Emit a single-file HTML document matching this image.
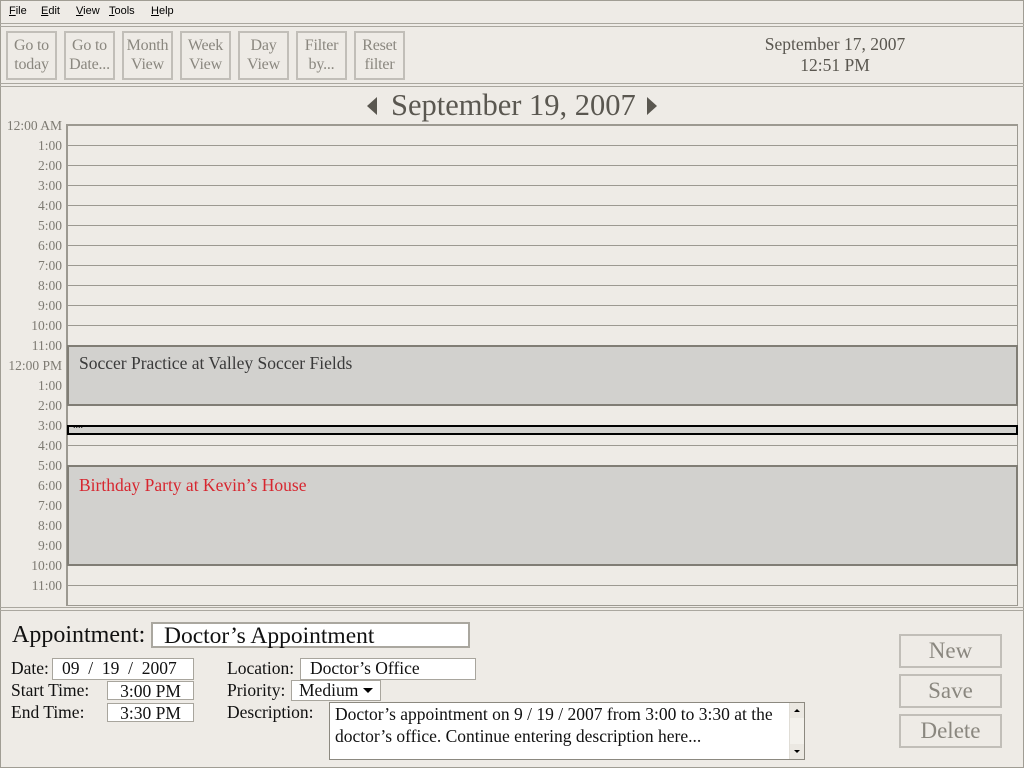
<!DOCTYPE html>
<html><head><meta charset="utf-8"><style>
*{margin:0;padding:0;box-sizing:border-box}
body{width:1024px;height:768px;background:#eeebe6;position:relative;overflow:hidden;font-family:"Liberation Serif",serif;color:#111}
.a{position:absolute}
.menu{top:5px;font-family:"Liberation Sans",sans-serif;font-size:11px;color:#000}
.menu u{text-decoration:underline}
.sep{left:0;width:1024px;height:4px;border-top:1px solid #aaa79f;border-bottom:1px solid #aaa79f}
.tb{top:31px;height:49px;border:2px solid #c1beb8;color:#8a877f;font-size:16px;text-align:center;line-height:19px;padding-top:3px;white-space:nowrap;letter-spacing:-0.2px}
.lbl{width:62px;left:0;text-align:right;font-size:13.5px;color:#7d7a72;line-height:14px;white-space:nowrap}
.hl{left:67px;width:950px;height:1px;background:#9c9991}
.ev{left:67px;width:951px;background:#d2d1ce;border:2px solid #807d75}
.f{font-size:17.5px;line-height:18px;white-space:nowrap}
.box{background:#fff;border:1px solid #a8a59d}
.btn{left:899px;width:103px;height:34px;border:2px solid #c1beb8;color:#8a877f;font-size:23px;text-align:center;line-height:30px}
</style></head><body>
<div class="a" style="left:0;top:0;width:1024px;height:768px;border:1px solid #a09d94"></div>
<div class="a menu" style="left:9px"><u>F</u>ile</div>
<div class="a menu" style="left:41px"><u>E</u>dit</div>
<div class="a menu" style="left:76px"><u>V</u>iew</div>
<div class="a menu" style="left:109px"><u>T</u>ools</div>
<div class="a menu" style="left:151px"><u>H</u>elp</div>
<div class="a sep" style="top:23px"></div>
<div class="a tb" style="left:6px;width:51px">Go to<br>today</div>
<div class="a tb" style="left:64px;width:51px">Go to<br>Date...</div>
<div class="a tb" style="left:122px;width:51px">Month<br>View</div>
<div class="a tb" style="left:180px;width:51px">Week<br>View</div>
<div class="a tb" style="left:238px;width:51px">Day<br>View</div>
<div class="a tb" style="left:296px;width:51px">Filter<br>by...</div>
<div class="a tb" style="left:354px;width:51px">Reset<br>filter</div>
<div class="a" style="left:735px;top:34px;width:200px;text-align:center;font-size:17.5px;line-height:21px;color:#5a5750">September 17, 2007<br>12:51 PM</div>
<div class="a sep" style="top:83px"></div>
<svg class="a" style="left:366px;top:96px" width="12" height="20"><path d="M11 1 L1 10 L11 19Z" fill="#5a5750"/></svg>
<div class="a" style="left:391px;top:88px;font-size:30.5px;line-height:34px;color:#5a5750;white-space:nowrap">September 19, 2007</div>
<svg class="a" style="left:646px;top:96px" width="12" height="20"><path d="M1 1 L11 10 L1 19Z" fill="#5a5750"/></svg>
<div class="a" style="left:66px;top:124px;width:952px;height:482px;border:2px solid #9c9991;border-right-width:1px;border-bottom-width:1px"></div>
<div id="g"></div>
<div class="a ev" style="top:345px;height:61px"><div style="position:absolute;left:10px;top:6px;font-size:17.5px;color:#3a3a3a;white-space:nowrap">Soccer Practice at Valley Soccer Fields</div></div>
<div class="a" style="left:67px;top:425px;width:951px;height:10px;background:#d2d1ce;border:2px solid #000"><div style="position:absolute;left:4px;top:-7px;font-size:10px">....</div></div>
<div class="a ev" style="top:465px;height:101px"><div style="position:absolute;left:10px;top:8px;font-size:17.5px;color:#d7262f;white-space:nowrap">Birthday Party at Kevin’s House</div></div>
<div class="a sep" style="top:607px"></div>
<div class="a" style="left:12px;top:622px;font-size:24px;line-height:26px">Appointment:</div>
<div class="a box" style="left:151px;top:622px;width:319px;height:26px;font-size:23.5px;line-height:24px;padding-left:11px;border:2px solid #aaa79f;white-space:nowrap">Doctor’s Appointment</div>
<div class="a f" style="left:11px;top:659px">Date:</div>
<div class="a box f" style="left:52px;top:658px;width:142px;height:22px;padding:0 0 0 9px;white-space:pre">09  /  19  /  2007</div>
<div class="a f" style="left:11px;top:681px">Start Time:</div>
<div class="a box f" style="left:107px;top:681px;width:87px;height:19px;text-align:center">3:00 PM</div>
<div class="a f" style="left:11px;top:703px">End Time:</div>
<div class="a box f" style="left:107px;top:703px;width:87px;height:19px;text-align:center">3:30 PM</div>
<div class="a f" style="left:227px;top:659px">Location:</div>
<div class="a box f" style="left:300px;top:658px;width:176px;height:22px;padding:0 0 0 9px">Doctor’s Office</div>
<div class="a f" style="left:227px;top:681px">Priority:</div>
<div class="a box f" style="left:291px;top:680px;width:90px;height:21px;padding:0 0 0 7px">Medium <svg width="10" height="6" style="vertical-align:2px"><path d="M0 0H10L5 5Z" fill="#000"/></svg></div>
<div class="a f" style="left:227px;top:703px">Description:</div>
<div class="a box f" style="left:329px;top:702px;width:476px;height:58px;padding:0 0 0 5px;border:1px solid #8c8980;line-height:22px">Doctor’s appointment on 9 / 19 / 2007 from 3:00 to 3:30 at the<br>doctor’s office. Continue entering description here...</div>
<div class="a" style="left:789px;top:703px;width:15px;height:56px;background:#f3f1ec;border-left:1px solid #e0ddd6">
<div style="position:absolute;left:0;top:0;width:14px;height:15px;background:#ebe8e2"><svg width="14" height="15"><path d="M4 9H10L7 6Z" fill="#000"/></svg></div>
<div style="position:absolute;left:0;bottom:0;width:14px;height:15px;background:#ebe8e2"><svg width="14" height="15"><path d="M4 6H10L7 9Z" fill="#000"/></svg></div></div>
<div class="a btn" style="top:634px">New</div>
<div class="a btn" style="top:674px">Save</div>
<div class="a btn" style="top:714px">Delete</div>
<script>
var g=document.getElementById('g'),h='';
var L=['12:00 AM','1:00','2:00','3:00','4:00','5:00','6:00','7:00','8:00','9:00','10:00','11:00','12:00 PM','1:00','2:00','3:00','4:00','5:00','6:00','7:00','8:00','9:00','10:00','11:00'];
for(var i=0;i<24;i++){var y=125+i*20;h+='<div class="a lbl" style="top:'+(y-6)+'px">'+L[i]+'</div>';if(i>0)h+='<div class="a hl" style="top:'+y+'px"></div>';}
g.innerHTML=h;
</script>
</body></html>
